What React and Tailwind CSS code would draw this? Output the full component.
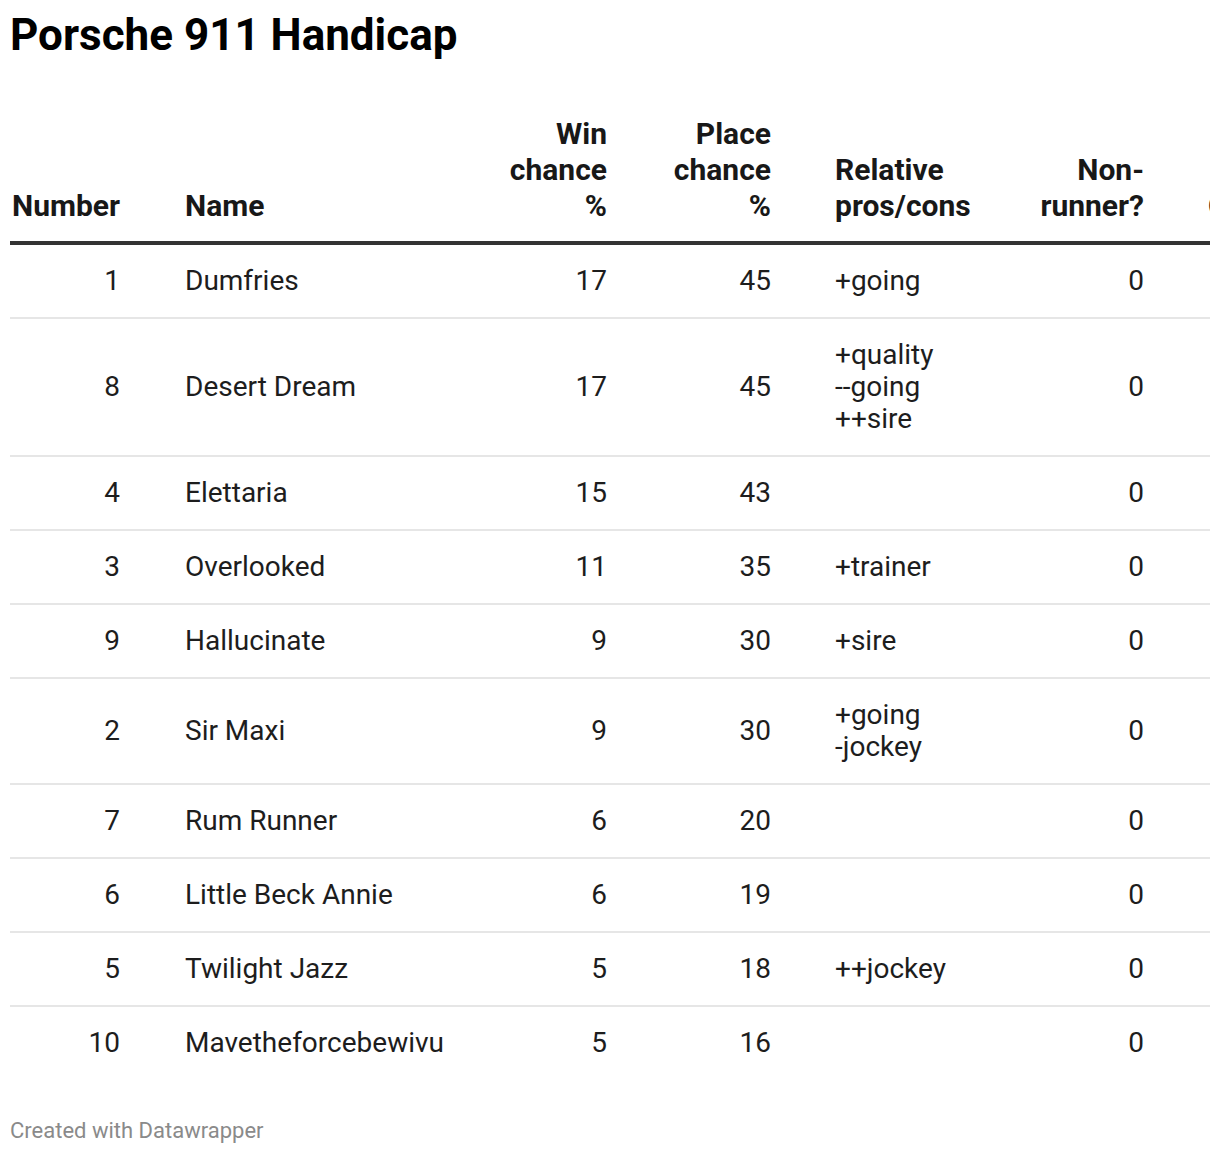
import React from 'react';

const headers = [
  { lines: ['Number'], align: 'text-right', cls: 'w-[110px]' },
  { lines: ['Name'], align: 'text-left', cls: 'w-[370px] pl-[65px]' },
  { lines: ['Win', 'chance', '%'], align: 'text-right', cls: 'w-[117px]' },
  { lines: ['Place', 'chance', '%'], align: 'text-right', cls: 'w-[164px]' },
  { lines: ['Relative', 'pros/cons'], align: 'text-left', cls: 'w-[229px] pl-[64px]' },
  { lines: ['Non-', 'runner?'], align: 'text-right', cls: 'w-[144px]' },
  { lines: ['Odds'], align: 'text-left', cls: 'w-[156px] pl-[64px]' },
];

const runners = [
  { num: 1, name: 'Dumfries', win: 17, place: 45, notes: ['+going'], nr: 0 },
  { num: 8, name: 'Desert Dream', win: 17, place: 45, notes: ['+quality', '--going', '++sire'], nr: 0 },
  { num: 4, name: 'Elettaria', win: 15, place: 43, notes: [], nr: 0 },
  { num: 3, name: 'Overlooked', win: 11, place: 35, notes: ['+trainer'], nr: 0 },
  { num: 9, name: 'Hallucinate', win: 9, place: 30, notes: ['+sire'], nr: 0 },
  { num: 2, name: 'Sir Maxi', win: 9, place: 30, notes: ['+going', '-jockey'], nr: 0 },
  { num: 7, name: 'Rum Runner', win: 6, place: 20, notes: [], nr: 0 },
  { num: 6, name: 'Little Beck Annie', win: 6, place: 19, notes: [], nr: 0 },
  { num: 5, name: 'Twilight Jazz', win: 5, place: 18, notes: ['++jockey'], nr: 0 },
  { num: 10, name: 'Mavetheforcebewivu', win: 5, place: 16, notes: [], nr: 0 },
];

export default function App() {
  return (
    <div
      className="w-[1220px] bg-white px-[10px] pt-[11px] pb-[12px] text-[#1d1d1d]"
      style={{ fontFamily: 'Roboto, "Liberation Sans", sans-serif' }}
    >
      <h1 className="text-[44px] font-bold leading-[48px] text-black">Porsche 911 Handicap</h1>

      <div className="mt-[57px] w-[1200px] overflow-hidden">
        <table className="w-[1290px] table-fixed border-collapse">
          <thead>
            <tr>
              {headers.map((h, i) => (
                <th
                  key={i}
                  className={`${h.cls} ${h.align} align-bottom pb-[17px] text-[30px] font-bold leading-[36px] text-[#181818] whitespace-nowrap border-b-4 border-[#333333]`}
                >
                  {h.lines.map((l, j) => (
                    <div key={j}>{l}</div>
                  ))}
                </th>
              ))}
            </tr>
          </thead>
          <tbody className="text-[28px] leading-[32px]">
            {runners.map((r, i) => {
              const last = i === runners.length - 1;
              const rowCls = last ? '' : 'border-b-2 border-[#e6e6e6]';
              return (
                <tr key={r.num}>
                  <td className={`py-[20px] text-right align-middle ${rowCls}`}>{r.num}</td>
                  <td className={`py-[20px] pl-[65px] text-left align-middle ${rowCls}`}>{r.name}</td>
                  <td className={`py-[20px] text-right align-middle ${rowCls}`}>{r.win}</td>
                  <td className={`py-[20px] text-right align-middle ${rowCls}`}>{r.place}</td>
                  <td className={`py-[20px] pl-[64px] text-left align-middle ${rowCls}`}>
                    {r.notes.map((n, j) => (
                      <div key={j}>{n}</div>
                    ))}
                  </td>
                  <td className={`py-[20px] text-right align-middle ${rowCls}`}>{r.nr}</td>
                  <td className={`py-[20px] pl-[64px] align-middle ${rowCls}`}></td>
                </tr>
              );
            })}
          </tbody>
        </table>
      </div>

      <div className="mt-[40px] text-[22px] leading-[24px] text-[#8a8a8a]">Created with Datawrapper</div>
    </div>
  );
}
